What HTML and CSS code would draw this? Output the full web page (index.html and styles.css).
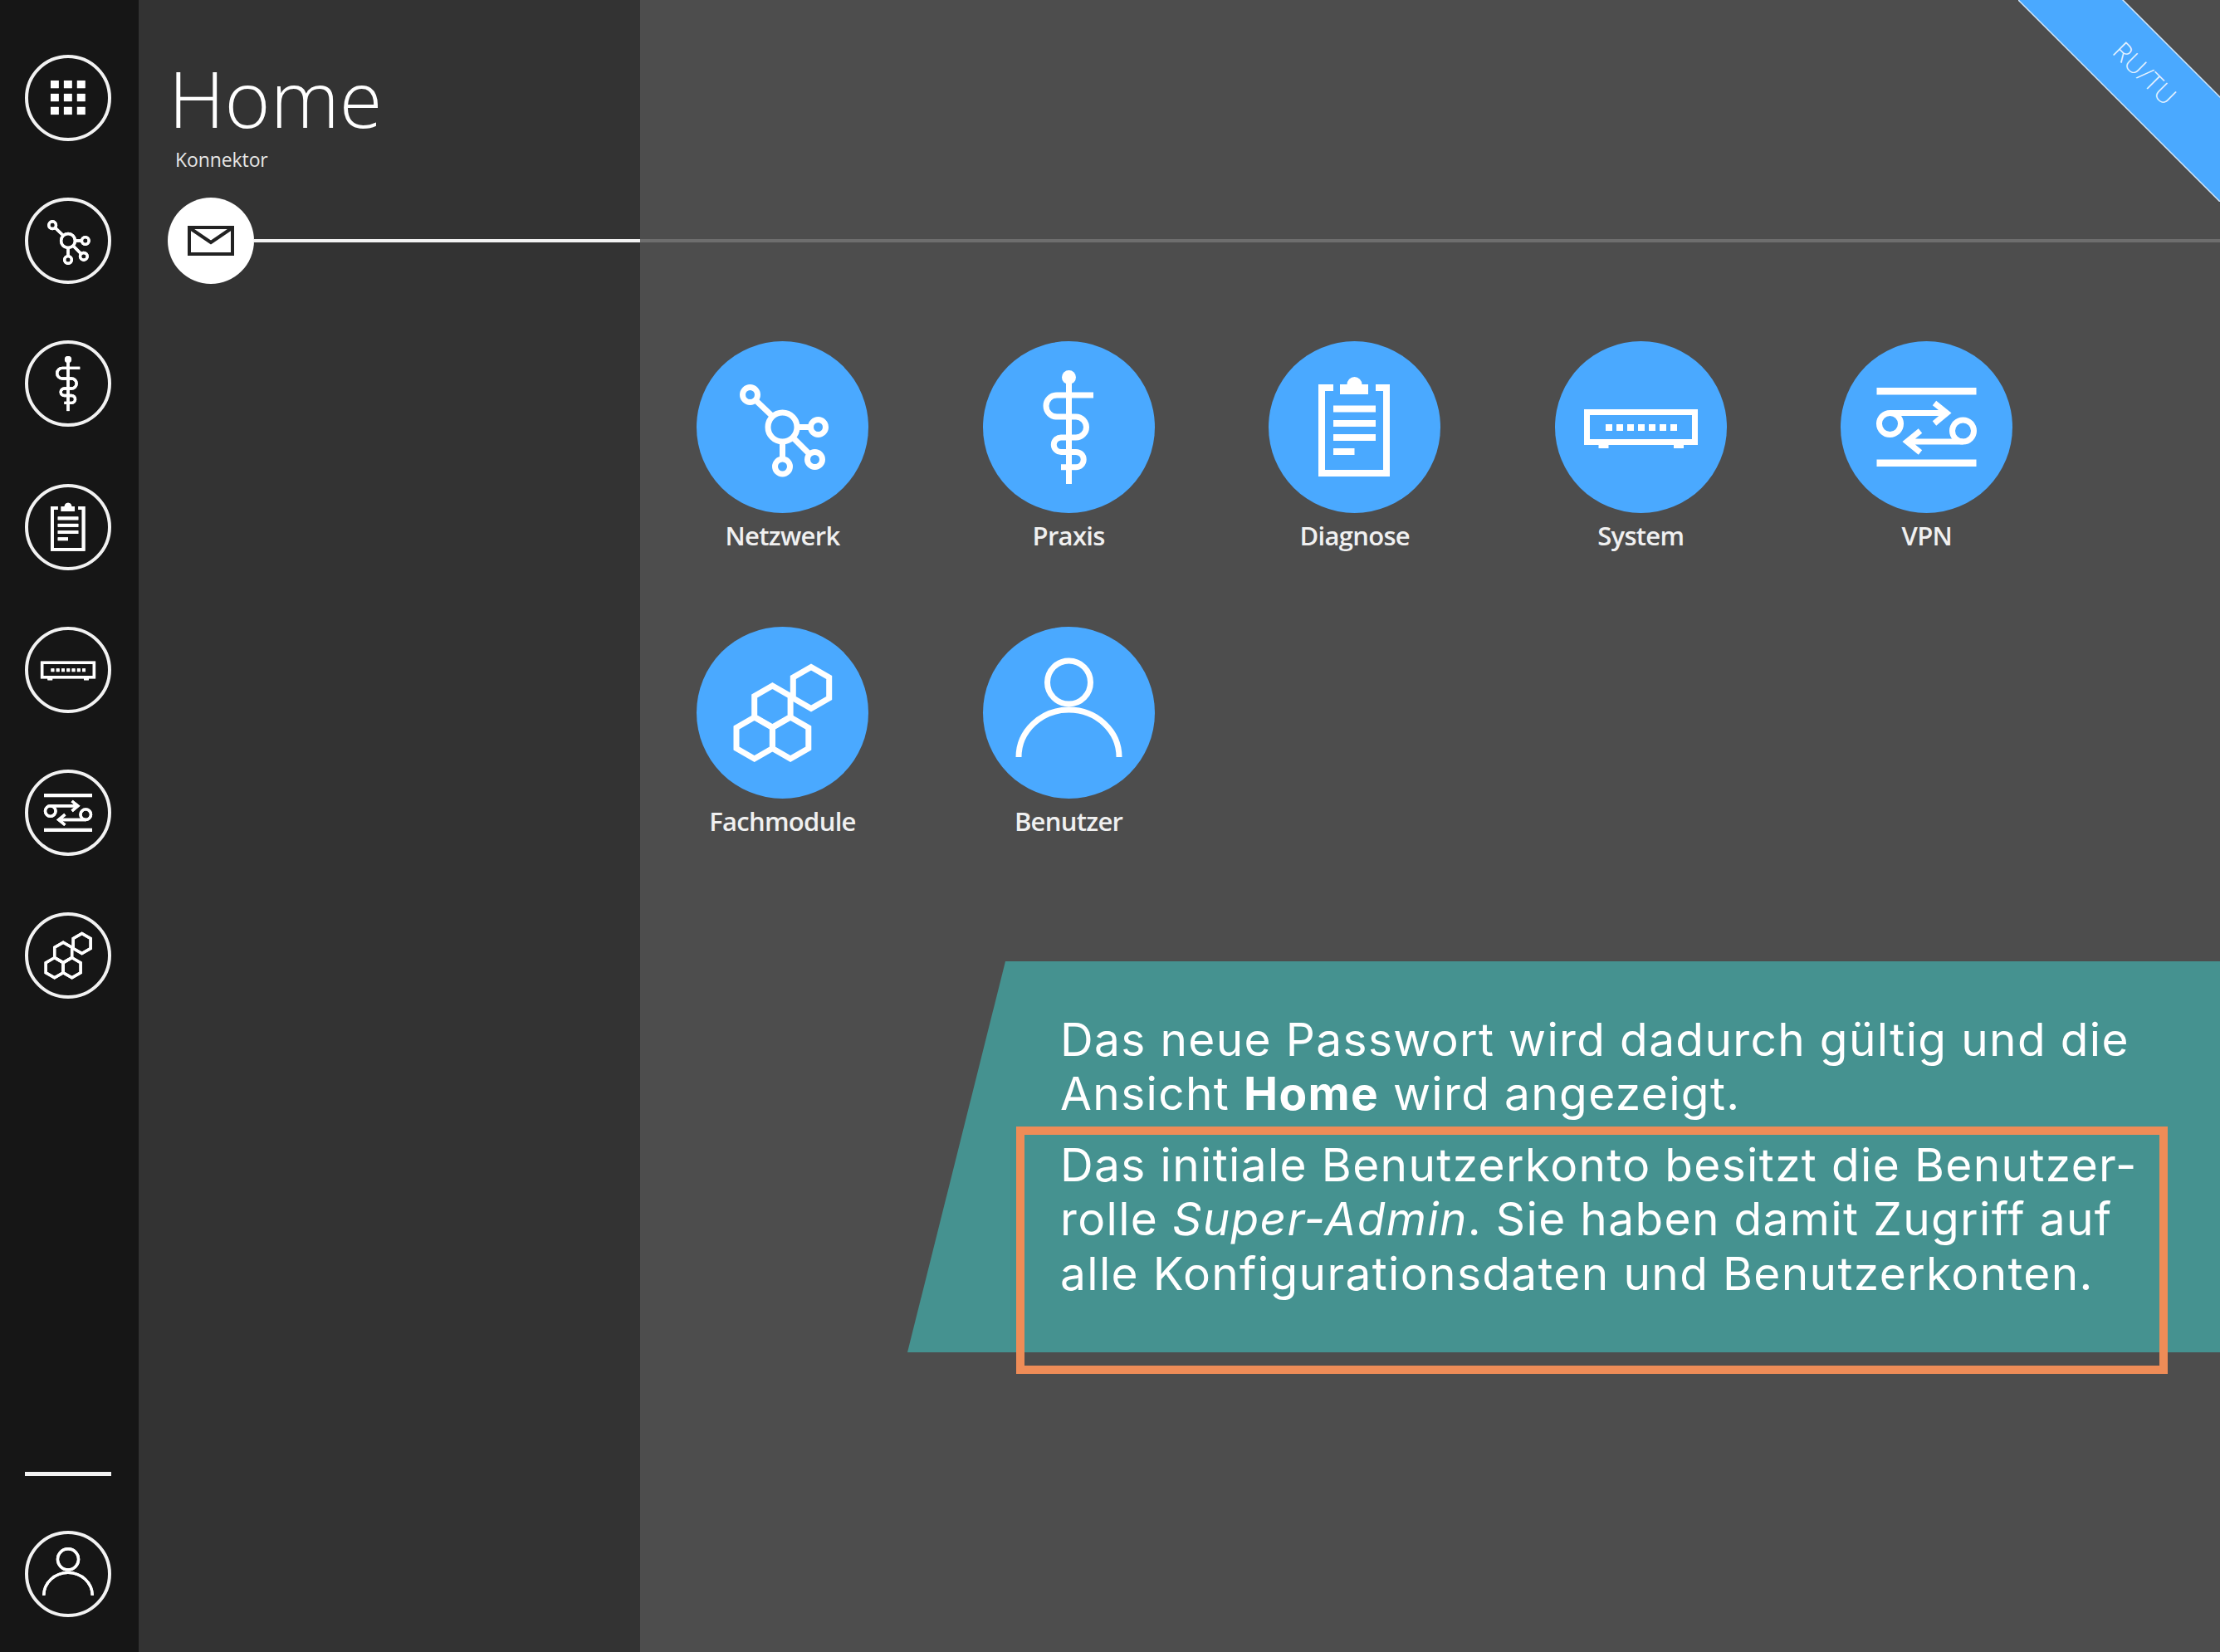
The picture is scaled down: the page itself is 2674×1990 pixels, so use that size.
FILE: index.html
```html
<!DOCTYPE html>
<html lang="de">

<head>
    <meta charset="UTF-8">
    <title>Home - Konnektor</title>
    <link rel="stylesheet" href="styles.css">
</head>

<body>
    <svg class="icon-defs" width="0" height="0">
        <symbol id="i-apps" viewBox="0 0 207 207">
            <g class="solid">
                <rect x="60" y="60" width="20" height="19"/><rect x="93" y="60" width="20" height="19"/><rect x="126" y="60" width="20" height="19"/>
                <rect x="60" y="93" width="20" height="19"/><rect x="93" y="93" width="20" height="19"/><rect x="126" y="93" width="20" height="19"/>
                <rect x="60" y="126" width="20" height="19"/><rect x="93" y="126" width="20" height="19"/><rect x="126" y="126" width="20" height="19"/>
            </g>
        </symbol>
        <symbol id="i-net" viewBox="0 0 207 207">
            <g class="line">
                <circle cx="64.5" cy="64.5" r="9"/><circle cx="103.5" cy="103.5" r="17.500"/><circle cx="146.5" cy="103.5" r="9"/>
                <circle cx="142.5" cy="142.5" r="9"/><circle cx="103.5" cy="151" r="9"/>
                <path d="M71 71 91 90M121 103.500H137.500M116 116 136 136M103.500 121V142"/>
            </g>
        </symbol>
        <symbol id="i-praxis" viewBox="0 0 207 207">
            <circle class="solid" cx="103.500" cy="43.500" r="8.500"/>
            <path class="line" d="M103.500 44V172" stroke-width="8.500"/>
            <path class="line" d="M133 65H89A13 13 0 0 0 89 91H112A12.500 12.500 0 0 1 112 116H94A8.700 8.700 0 0 0 94 133.400H112A9.200 9.200 0 0 1 112 151.800H94"/>
        </symbol>
        <symbol id="i-diag" viewBox="0 0 207 207">
            <path class="line thick" d="M78 56H64V159H142V56H129"/>
            <g class="solid">
                <rect x="86" y="52" width="34" height="12"/><circle cx="103.500" cy="52" r="9"/>
                <rect x="78" y="77.500" width="51" height="8"/><rect x="78" y="95" width="51" height="8"/>
                <rect x="78" y="112" width="51" height="8"/><rect x="78" y="129" width="25.500" height="8"/>
            </g>
        </symbol>
        <symbol id="i-system" viewBox="0 0 207 207">
            <rect class="line" x="38.500" y="85.500" width="130" height="36"/>
            <g class="solid">
                <rect x="52.500" y="124" width="12" height="5"/><rect x="143" y="124" width="12" height="5"/>
                <rect x="61" y="100" width="8" height="8"/><rect x="74" y="100" width="8" height="8"/><rect x="87" y="100" width="8" height="8"/>
                <rect x="100" y="100" width="8" height="8"/><rect x="113" y="100" width="8" height="8"/><rect x="126" y="100" width="8" height="8"/><rect x="139" y="100" width="8" height="8"/>
            </g>
        </symbol>
        <symbol id="i-vpn" viewBox="0 0 207 207">
            <g class="solid">
                <rect x="43.500" y="56" width="120" height="8.500"/><rect x="43.500" y="142.500" width="120" height="8.500"/>
            </g>
            <g class="line">
                <circle cx="59.500" cy="99.500" r="13"/><circle cx="147.500" cy="108" r="13"/>
                <path d="M59.500 86.500H128M113 74.500 128 86.500 113 99M147.500 121H80M96 108 80 121 96 134"/>
            </g>
        </symbol>
        <symbol id="i-hex" viewBox="0 0 207 207">
            <g class="line">
                <path d="M138 48.500 159.700 61V86L138 98.500 116.300 86V61Z"/>
                <path d="M91.400 71 113.100 83.500V108.500L91.400 121 69.700 108.500V83.500Z"/>
                <path d="M69.700 109 91.400 121.500V146.500L69.700 159 48 146.500V121.500Z"/>
                <path d="M113.100 109 134.800 121.500V146.500L113.100 159 91.400 146.500V121.500Z"/>
            </g>
        </symbol>
        <symbol id="i-user" viewBox="0 0 207 207">
            <g class="line">
                <circle cx="103.500" cy="67" r="26"/>
                <path d="M43 157A60.500 57 0 0 1 164 157"/>
            </g>
        </symbol>
    </svg>

    <div class="screen">
        <nav class="rail">
            <a class="rail-btn"><svg><use href="#i-apps"/></svg></a>
            <a class="rail-btn"><svg><use href="#i-net"/></svg></a>
            <a class="rail-btn"><svg><use href="#i-praxis"/></svg></a>
            <a class="rail-btn"><svg><use href="#i-diag"/></svg></a>
            <a class="rail-btn"><svg><use href="#i-system"/></svg></a>
            <a class="rail-btn"><svg><use href="#i-vpn"/></svg></a>
            <a class="rail-btn"><svg><use href="#i-hex"/></svg></a>
            <div class="rail-sep"></div>
            <a class="rail-btn"><svg><use href="#i-user"/></svg></a>
        </nav>

        <aside class="panel">
            <h1 class="panel-title">Home</h1>
            <div class="panel-sub">Konnektor</div>
            <div class="tab-row">
                <div class="tab-mail">
                    <svg width="60" height="40" viewBox="0 0 60 40">
                        <path class="mail" d="M4 4H56V36H4ZM5 5 30 22 55 5"/>
                    </svg>
                </div>
                <div class="tab-line"></div>
            </div>
        </aside>

        <main class="main">
            <div class="main-head"></div>
            <div class="tiles">
                <a class="tile"><span class="tile-icon"><svg><use href="#i-net"/></svg></span><span class="tile-label">Netzwerk</span></a>
                <a class="tile"><span class="tile-icon"><svg><use href="#i-praxis"/></svg></span><span class="tile-label">Praxis</span></a>
                <a class="tile"><span class="tile-icon"><svg><use href="#i-diag"/></svg></span><span class="tile-label">Diagnose</span></a>
                <a class="tile"><span class="tile-icon"><svg><use href="#i-system"/></svg></span><span class="tile-label">System</span></a>
                <a class="tile"><span class="tile-icon"><svg><use href="#i-vpn"/></svg></span><span class="tile-label">VPN</span></a>
                <a class="tile"><span class="tile-icon"><svg><use href="#i-hex"/></svg></span><span class="tile-label">Fachmodule</span></a>
                <a class="tile"><span class="tile-icon"><svg><use href="#i-user"/></svg></span><span class="tile-label">Benutzer</span></a>
            </div>

            <div class="ribbon">
                <svg width="243" height="243" viewBox="0 0 243 243">
                    <polygon class="ribbon-bg" points="-5,-5 121,-5 250,124 250,250"/>
                </svg>
                <span class="ribbon-text">RU/TU</span>
            </div>

            <div class="callout">
                <p>Das neue Passwort wird dadurch gültig und die<br>Ansicht <b>Home</b> wird angezeigt.</p>
                <p>Das initiale Benutzerkonto besitzt die Benutzer-<br>rolle <i>Super-Admin</i>. Sie haben damit Zugriff auf<br>alle Konfigurationsdaten und Benutzerkonten.</p>
            </div>
            <div class="mark"></div>
        </main>
    </div>
</body>

</html>
```

FILE: styles.css
```css
* {
    margin: 0;
    padding: 0;
    box-sizing: border-box;
}

html,
body {
    width: 2674px;
    height: 1990px;
    overflow: hidden;
}

body {
    background: #4d4d4d;
    color: #fff;
    font-family: "Open Sans", "Liberation Sans", sans-serif;
}

.icon-defs {
    position: absolute;
}

.solid {
    fill: #fff;
}

.line {
    fill: none;
    stroke: #fff;
    stroke-width: 7;
}

.thick {
    stroke-width: 8;
}

.screen {
    display: flex;
    height: 1990px;
}

/* left icon rail */
.rail {
    width: 167px;
    height: 100%;
    background: #161616;
    display: flex;
    flex-direction: column;
    align-items: center;
    gap: 68.200px;
    padding: 66px 3px 42px 0;
}

.rail-btn {
    width: 104px;
    height: 104px;
    flex: none;
    border: 4px solid #f2f2f2;
    border-radius: 50%;
    display: flex;
    align-items: center;
    justify-content: center;
}

.rail-btn svg {
    width: 100px;
    height: 100px;
    flex: none;
    filter: drop-shadow(0 0 0.5px #fff);
}

.rail-sep {
    width: 104px;
    height: 5px;
    background: #f2f2f2;
    margin-top: auto;
    margin-bottom: -2px;
}

/* second column */
.panel {
    width: 604px;
    height: 100%;
    background: #333;
    padding-top: 68px;
}

.panel-title {
    font-size: 94px;
    font-weight: 300;
    line-height: 101px;
    padding-left: 36px;
}

.panel-sub {
    font-size: 23px;
    line-height: 30px;
    letter-spacing: -0.1px;
    padding-left: 44px;
    margin-top: 8px;
    color: #e6e6e6;
}

.tab-row {
    display: flex;
    align-items: center;
    padding-left: 35px;
    margin-top: 31px;
}

.tab-mail {
    width: 104px;
    height: 104px;
    flex: none;
    background: #fff;
    border-radius: 50%;
    display: flex;
    align-items: center;
    justify-content: center;
}

.mail {
    fill: none;
    stroke: #222;
    stroke-width: 4;
}

.tab-line {
    flex: 1;
    height: 4px;
    background: #f2f2f2;
}

/* main area */
.main {
    flex: 1;
    position: relative;
}

.main-head {
    height: 292px;
    border-bottom: 4px solid #6e6e6e;
}

.tiles {
    display: grid;
    grid-template-columns: repeat(5, 344.6px);
    grid-auto-rows: 344px;
    margin: 119px 0 0 -0.8px;
}

.tile {
    display: flex;
    flex-direction: column;
    align-items: center;
}

.tile-icon {
    width: 207px;
    height: 207px;
    background: #4aa9ff;
    border-radius: 50%;
}

.tile-icon svg {
    display: block;
    width: 207px;
    height: 207px;
}

.tile-label {
    font-size: 31px;
    font-weight: 600;
    line-height: 44px;
    margin-top: 5px;
    letter-spacing: -0.7px;
    color: #f0f0f0;
}

.ribbon {
    position: absolute;
    top: 0;
    right: 0;
    width: 243px;
    height: 243px;
}

.ribbon svg {
    display: block;
}

.ribbon-bg {
    fill: #4aa9ff;
    stroke: #cfe6fb;
    stroke-width: 1.5;
}

.ribbon-text {
    position: absolute;
    left: 103px;
    top: 68px;
    width: 100px;
    text-align: center;
    font-size: 31px;
    font-weight: 300;
    letter-spacing: 0.5px;
    line-height: 40px;
    color: #e6f3ff;
    transform: rotate(45deg);
}

.callout {
    position: absolute;
    left: 322px;
    right: 0;
    top: 1158px;
    height: 471px;
    background: #459290;
    clip-path: polygon(118px 0, 100% 0, 100% 100%, 0 100%);
    padding: 61.500px 0 0 184px;
    font-family: Inter, Lato, "Open Sans", sans-serif;
    font-size: 55px;
    line-height: 65.5px;
    letter-spacing: 1.35px;
    white-space: nowrap;
}

.callout p + p {
    margin-top: 20px;
}

.mark {
    position: absolute;
    left: 453px;
    top: 1357px;
    width: 1387px;
    height: 298px;
    border: 10px solid #ee8c57;
}
```
